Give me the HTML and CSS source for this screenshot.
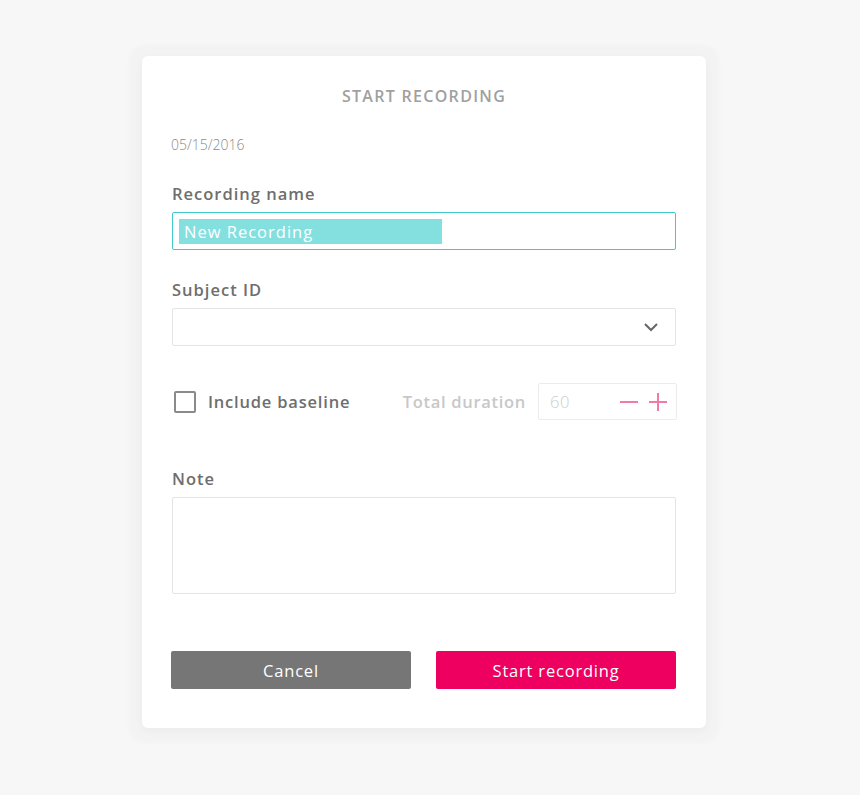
FILE: index.html
```html
<!DOCTYPE html>
<html lang="en">
<head>
<meta charset="utf-8">
<title>Start recording</title>
<link rel="stylesheet" href="styles.css">
</head>
<body>
<div class="page">
  <div class="card">
    <h1 class="title">START RECORDING</h1>
    <div class="date">05/15/2016</div>

    <label class="label">Recording name</label>
    <div class="input input-focus"><span class="selected">New Recording</span></div>

    <label class="label">Subject ID</label>
    <div class="input select">
      <svg class="chevron" width="16" height="10" viewBox="0 0 16 10"><path d="M2 2 L8 8 L14 2" fill="none" stroke="#666" stroke-width="2"/></svg>
    </div>

    <div class="options">
      <div class="check">
        <span class="box"></span>
        <span class="check-text">Include baseline</span>
      </div>
      <div class="duration">
        <span class="duration-label">Total duration</span>
        <div class="stepper">
          <span class="num">60</span>
          <svg class="step" width="20" height="20" viewBox="0 0 20 20"><path d="M1 10 H19" stroke="#f27aa8" stroke-width="2"/></svg>
          <svg class="step" width="20" height="20" viewBox="0 0 20 20"><path d="M1 10 H19 M10 1 V19" stroke="#f27aa8" stroke-width="2"/></svg>
        </div>
      </div>
    </div>

    <label class="label label-note">Note</label>
    <div class="input textarea"></div>

    <div class="actions">
      <button class="btn btn-cancel">Cancel</button>
      <button class="btn btn-start">Start recording</button>
    </div>
  </div>
</div>
</body>
</html>
```

FILE: styles.css
```css
* { box-sizing: border-box; }
html, body { margin: 0; padding: 0; }
body {
  background: #f7f7f7;
  font-family: "Open Sans", "Liberation Sans", sans-serif;
  width: 860px;
  height: 795px;
  overflow: hidden;
}
.page {
  padding: 56px 0 0 142px;
}
.card {
  width: 564px;
  background: #fff;
  border-radius: 6px;
  padding: 30px 30px 39px 30px;
  box-shadow: 0 2px 3px 14px rgba(0,0,0,0.016), 0 3px 10px rgba(0,0,0,0.035);
  display: flex;
  flex-direction: column;
}
.title {
  margin: 0;
  text-align: center;
  font-size: 16px;
  line-height: 20px;
  font-weight: 600;
  color: #a0a0a0;
  letter-spacing: 1.3px;
}
.date {
  margin-top: 30px;
  margin-left: -1px;
  font-size: 14px;
  line-height: 18px;
  font-weight: 300;
  color: #8a8a8a;
}
.label {
  display: block;
  margin-top: 29px;
  margin-bottom: 7px;
  font-size: 16.5px;
  line-height: 22px;
  font-weight: 600;
  color: #6e6e6e;
  letter-spacing: 1px;
}
.label-note { margin-top: 48px; }
.input {
  height: 38px;
  border: 1px solid #e4e4e4;
  border-radius: 2px;
  display: flex;
  align-items: center;
}
.input-focus {
  border-color: #3ccaca;
  padding-left: 6px;
}
.selected {
  display: block;
  width: 263px;
  height: 25px;
  background: #84dfdf;
  color: #fff;
  font-size: 16.5px;
  line-height: 25px;
  font-weight: 400;
  padding-left: 5px;
  letter-spacing: 1px;
}
.select {
  justify-content: flex-end;
  padding-right: 16px;
}
.chevron { display: block; }
.options {
  margin-top: 37px;
  height: 37px;
  display: flex;
  align-items: center;
  justify-content: space-between;
}
.check {
  display: flex;
  align-items: center;
  padding-left: 2px;
}
.box {
  width: 22px;
  height: 22px;
  border: 2px solid #8a8a8a;
  border-radius: 2px;
}
.check-text {
  margin-left: 12px;
  font-size: 16.5px;
  font-weight: 600;
  color: #6e6e6e;
  letter-spacing: 0.8px;
}
.duration {
  display: flex;
  align-items: center;
  margin-right: -1px;
}
.duration-label {
  font-size: 16.5px;
  font-weight: 600;
  color: #c8c8c8;
  margin-right: 12px;
  letter-spacing: 0.7px;
}
.stepper {
  width: 139px;
  height: 37px;
  border: 1px solid #ececec;
  border-radius: 2px;
  display: flex;
  align-items: center;
  padding: 0 8px 0 11px;
}
.num {
  flex: 1;
  font-size: 16.5px;
  font-weight: 300;
  color: #cccccc;
  letter-spacing: 0.5px;
}
.step { display: block; margin-left: 9px; }
.step:first-of-type { margin-left: 0; }
.textarea {
  height: 97px;
}
.actions {
  margin-top: 57px;
  display: flex;
  justify-content: space-between;
}
.btn {
  width: 240px;
  height: 38px;
  border: none;
  border-radius: 2px;
  color: #fff;
  font-family: inherit;
  font-size: 16.5px;
  font-weight: 400;
  letter-spacing: 0.8px;
  padding: 0;
}
.btn-cancel {
  background: #767676;
  margin-left: -1px;
}
.btn-start {
  background: #ed005f;
}
```
